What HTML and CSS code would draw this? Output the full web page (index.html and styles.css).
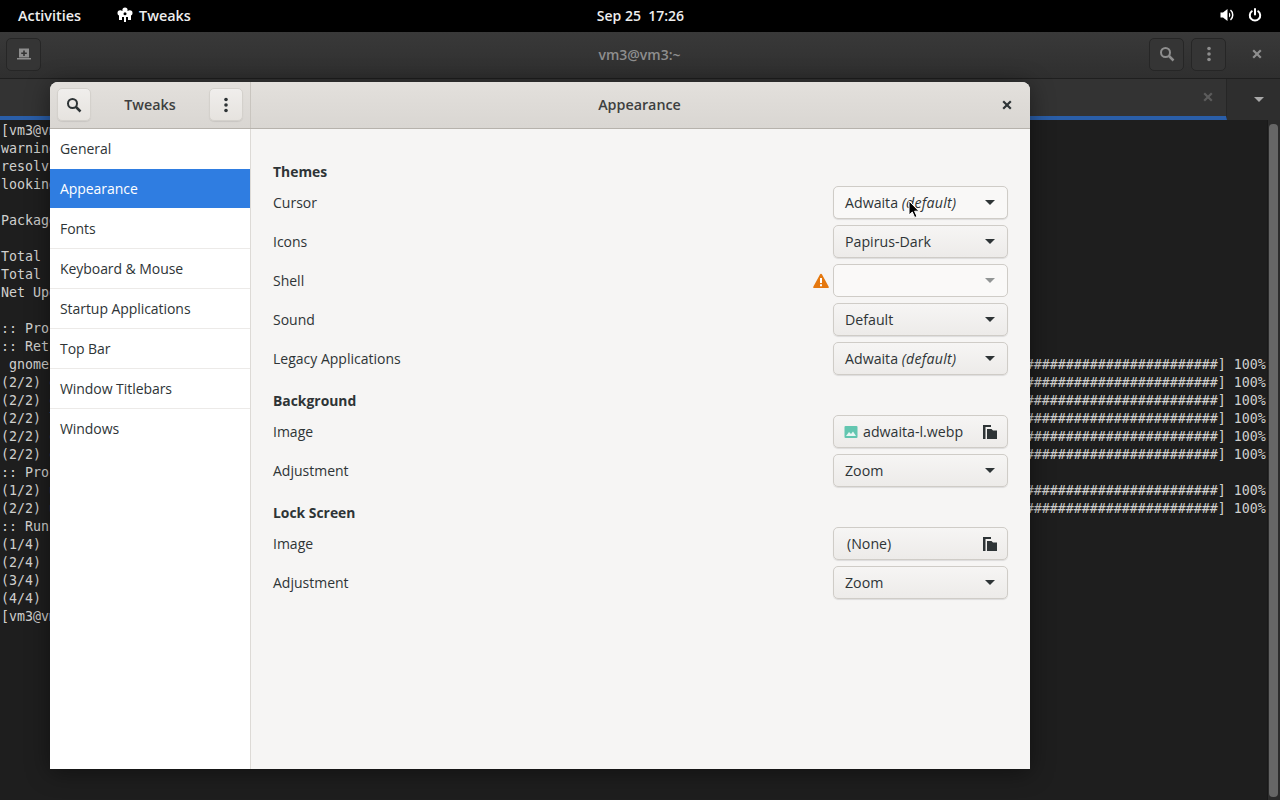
FILE: index.html
```html
<!DOCTYPE html>
<html lang="en">
<head>
<meta charset="utf-8">
<title>Tweaks</title>
<link rel="stylesheet" href="styles.css">
</head>
<body>
<header class="topbar">
  <div class="topbar-left">
    <span class="shell-label">Activities</span>
    <span class="app-menu">
      <svg class="ico16" viewBox="0 0 16 16"><g fill="#fff"><circle cx="8" cy="3" r="2.600"/><circle cx="3.200" cy="6" r="2.700"/><circle cx="12.800" cy="6" r="2.700"/><rect x="3" y="4" width="10" height="6"/><rect x="2" y="8" width="3" height="5"/><rect x="11" y="8" width="3" height="5"/><rect x="7" y="9" width="2" height="6"/></g><g fill="#000"><circle cx="8" cy="6.800" r="1.500"/><rect x="5.400" y="10.500" width="1" height="4"/><rect x="9.600" y="10.500" width="1" height="4"/></g></svg>
      <span class="shell-label">Tweaks</span>
    </span>
  </div>
  <div class="clock shell-label">Sep 25&nbsp; 17:26</div>
  <div class="topbar-right">
    <svg class="ico16" viewBox="0 0 16 16"><path fill="#fff" d="M1.500 5.500H4L8.500 2v12L4 10.500H1.500z"/><path fill="none" stroke="#fff" stroke-width="1.500" d="M11.500 3c3 2.500 3 7.500 0 10"/><path fill="#fff" d="M10 5.500c1.800 1 1.800 4 0 5z"/></svg>
    <svg class="ico16" viewBox="0 0 16 16"><path fill="none" stroke="#fff" stroke-width="2" stroke-linecap="round" d="M8 2v5.500M4.800 4.300a5.200 5.200 0 1 0 6.400 0"/></svg>
  </div>
</header>

<main class="terminal">
  <div class="term-head">
    <button class="tbtn term-new"><svg class="ico16" viewBox="0 0 16 16"><path fill="#8e8e8e" d="M3 2.500h10v9H3zM1 12h14v1.500H1z"/><path fill="#333" d="M7.200 4.500h1.600v2h2V8h-2v2H7.200V8h-2V6.500h2z"/></svg></button>
    <div class="term-title">vm3@vm3:~</div>
    <div class="term-actions">
      <button class="tbtn"><svg class="ico16" viewBox="0 0 16 16"><circle cx="6.500" cy="6.500" r="4.500" fill="none" stroke="#8e8e8e" stroke-width="2"/><path stroke="#8e8e8e" stroke-width="2.500" d="M10 10l4.500 4.500"/></svg></button>
      <button class="tbtn"><svg class="ico16" viewBox="0 0 16 16"><g fill="#8e8e8e"><circle cx="8" cy="2.500" r="1.800"/><circle cx="8" cy="8" r="1.800"/><circle cx="8" cy="13.500" r="1.800"/></g></svg></button>
      <span class="term-close"><svg class="ico16" viewBox="0 0 16 16"><path stroke="#8e8e8e" stroke-width="2.200" d="M4.200 4.200l7.600 7.600M11.800 4.200l-7.600 7.600"/></svg></span>
    </div>
  </div>
  <div class="term-tabs">
    <div class="term-tab"><svg class="ico16 tab-x" viewBox="0 0 16 16"><path stroke="#5c5c5c" stroke-width="2.200" d="M4.200 4.200l7.600 7.600M11.800 4.200l-7.600 7.600"/></svg></div>
    <div class="term-tabmenu"><svg class="caret" viewBox="0 0 10 6"><path fill="#a8a8a8" d="M0 0h10L5 5z"/></svg></div>
  </div>
  <div class="term-body">
<pre class="term-text">[vm3@vm3 ~]$ sudo pacman -S gnome-shell
warning: gnome-shell is up to date
resolving dependencies...
looking for conflicting packages...

Packages (2)

Total   Download Size:   0.00 MiB
Total   Installed Size:  0.00 MiB
Net Upgrade Size:      0.00 MiB

:: Proceed with installation? [Y/n]
:: Retrieving packages...
 gnome-shell                                                                                                    [#######################################] 100%
(2/2) checking keys in keyring                                                                                  [#######################################] 100%
(2/2) checking package integrity                                                                                [#######################################] 100%
(2/2) loading package files                                                                                     [#######################################] 100%
(2/2) checking for file conflicts                                                                               [#######################################] 100%
(2/2) checking available disk space                                                                             [#######################################] 100%
:: Processing package changes...
(1/2) upgrading gnome-shell                                                                                     [#######################################] 100%
(2/2) upgrading gnome-shell-extensions                                                                          [#######################################] 100%
:: Running post-transaction hooks...
(1/4)   Arming ConditionNeedsUpdate...
(2/4)   Compiling GSettings XML schema files...
(3/4)   Updating icon theme caches...
(4/4)   Updating the desktop file MIME type cache...
[vm3@vm3 ~]$</pre>
    <div class="scrollbar"><div class="thumb"></div></div>
  </div>
</main>

<section class="tweaks">
  <div class="tw-head">
    <div class="tw-head-left">
      <button class="hbtn"><svg class="ico16" viewBox="0 0 16 16"><circle cx="6.500" cy="6.500" r="4.500" fill="none" stroke="#2e3436" stroke-width="2"/><path stroke="#2e3436" stroke-width="2.500" d="M10 10l4.500 4.500"/></svg></button>
      <span class="tw-title">Tweaks</span>
      <button class="hbtn"><svg class="ico16" viewBox="0 0 16 16"><g fill="#2e3436"><circle cx="8" cy="2.500" r="1.800"/><circle cx="8" cy="8" r="1.800"/><circle cx="8" cy="13.500" r="1.800"/></g></svg></button>
    </div>
    <div class="tw-head-main">
      <span class="tw-title">Appearance</span>
      <svg class="ico16 tw-close" viewBox="0 0 16 16"><path stroke="#2e3436" stroke-width="2.200" d="M4.200 4.200l7.600 7.600M11.800 4.200l-7.600 7.600"/></svg>
    </div>
  </div>
  <div class="tw-body">
    <nav class="side">
      <div class="side-row">General</div>
      <div class="side-row is-active">Appearance</div>
      <div class="side-row">Fonts</div>
      <div class="side-row">Keyboard &amp; Mouse</div>
      <div class="side-row">Startup Applications</div>
      <div class="side-row">Top Bar</div>
      <div class="side-row">Window Titlebars</div>
      <div class="side-row">Windows</div>
    </nav>
    <div class="panel">
      <h2 class="sec sec-first">Themes</h2>
      <div class="rows">
        <div class="row"><span>Cursor</span><div class="combo"><span>Adwaita <em>(default)</em></span><svg class="caret" viewBox="0 0 10 6"><path fill="#2e3436" d="M0 0h10L5 5z"/></svg></div></div>
        <div class="row"><span>Icons</span><div class="combo combo-grad"><span>Papirus-Dark</span><svg class="caret" viewBox="0 0 10 6"><path fill="#2e3436" d="M0 0h10L5 5z"/></svg></div></div>
        <div class="row"><span>Shell</span><div class="ctl-wrap"><svg class="warn" viewBox="0 0 16 16"><path fill="#e5780f" d="M8 .800c.400 0 .700.200.900.500l6.800 12.500c.300.600-.100 1.300-.800 1.300H1.100c-.700 0-1.100-.700-.800-1.300L7.100 1.300c.200-.300.500-.500.900-.500z"/><path fill="#fff" d="M7 5h2v5H7zM7 11.200h2v2H7z"/></svg><div class="combo combo-off"><span></span><svg class="caret" viewBox="0 0 10 6"><path fill="#929595" d="M0 0h10L5 5z"/></svg></div></div></div>
        <div class="row"><span>Sound</span><div class="combo combo-grad"><span>Default</span><svg class="caret" viewBox="0 0 10 6"><path fill="#2e3436" d="M0 0h10L5 5z"/></svg></div></div>
        <div class="row"><span>Legacy Applications</span><div class="combo combo-grad"><span>Adwaita <em>(default)</em></span><svg class="caret" viewBox="0 0 10 6"><path fill="#2e3436" d="M0 0h10L5 5z"/></svg></div></div>
      </div>
      <h2 class="sec">Background</h2>
      <div class="rows">
        <div class="row"><span>Image</span><div class="combo combo-grad combo-file"><span class="file"><svg class="img-ico" viewBox="0 0 14 14"><rect x="0.500" y="1" width="13" height="12" rx="1" fill="#63c6b0"/><path fill="#e8f6f3" d="M2 11l3-4 2 2 2-2.500 3 4.500z"/></svg>adwaita-l.webp</span><svg class="ico16" viewBox="0 0 16 16"><path fill="#2e3436" d="M1 15V1h8v2H3.500v12z"/><path fill="#2e3436" d="M5 5h4.500L11 6.500h4V15H5z"/></svg></div></div>
        <div class="row"><span>Adjustment</span><div class="combo combo-grad"><span>Zoom</span><svg class="caret" viewBox="0 0 10 6"><path fill="#2e3436" d="M0 0h10L5 5z"/></svg></div></div>
      </div>
      <h2 class="sec">Lock Screen</h2>
      <div class="rows">
        <div class="row"><span>Image</span><div class="combo combo-grad combo-file"><span class="none">(None)</span><svg class="ico16" viewBox="0 0 16 16"><path fill="#2e3436" d="M1 15V1h8v2H3.500v12z"/><path fill="#2e3436" d="M5 5h4.500L11 6.500h4V15H5z"/></svg></div></div>
        <div class="row"><span>Adjustment</span><div class="combo combo-grad"><span>Zoom</span><svg class="caret" viewBox="0 0 10 6"><path fill="#2e3436" d="M0 0h10L5 5z"/></svg></div></div>
      </div>
    </div>
  </div>
</section>

<svg class="pointer" viewBox="0 0 12 19"><path fill="#000" stroke="#fff" stroke-width="1" d="M1 1v14l3.300-3 2.400 5.500 2.300-1-2.400-5.300H11z"/></svg>
</body>
</html>
```
FILE: styles.css
```css
* { box-sizing: border-box; }
html, body { margin: 0; height: 100%; }
body {
  width: 1280px; height: 800px; overflow: hidden; position: relative;
  background: #1e1e1e; display: flex; flex-direction: column;
  font-family: "Open Sans", "Noto Sans", sans-serif; font-size: 14px; color: #2e3436;
}
button { margin: 0; padding: 0; font: inherit; }
svg { display: block; flex: none; }
.ico16 { width: 16px; height: 16px; }
.caret { width: 10px; height: 6px; }

.topbar {
  height: 32px; flex: none; background: #000; color: #eee; display: grid;
  grid-template-columns: 1fr auto 1fr; align-items: center; padding: 0 18px 2px;
}
.shell-label { font-weight: 600; font-size: 14.4px; }
.clock { font-size: 14px; padding-left: 1px; }
.topbar-left { display: flex; align-items: center; gap: 36px; }
.app-menu { display: flex; align-items: center; gap: 6px; }
.topbar-right { display: flex; justify-content: flex-end; gap: 12px; margin-right: -1px; }

.terminal { flex: 1; display: flex; flex-direction: column; min-height: 0; }
.term-head {
  height: 47px; flex: none; display: flex; align-items: center; position: relative; padding: 0 6px 2px;
  background: linear-gradient(#393939, #2f2f2f); border-bottom: 1px solid #1f1f1f;
}
.term-title { position: absolute; left: 0; right: 1px; text-align: center; color: #8e8e8e; font-weight: 600; pointer-events: none; }
.term-actions { margin-left: auto; display: flex; align-items: center; gap: 7px; }
.tbtn {
  width: 35px; height: 33px; display: flex; align-items: center; justify-content: center;
  background: #353535; border: 1px solid #262626; border-radius: 5px;
}
.term-close { width: 46px; display: flex; justify-content: center; margin: 0 -6px 0 1px; }
.term-tabs { height: 41px; flex: none; display: flex; background: #2e2e2e; }
.term-tab {
  width: 1227px; background: #333; border-bottom: 4px solid #2a5ea8;
  display: flex; align-items: center; justify-content: flex-end; padding: 0 10px 2px 0;
  border-right: 1px solid #262626;
}
.term-tabmenu { flex: 1; display: flex; align-items: center; justify-content: center; padding-left: 10px; }
.term-body { flex: 1; min-height: 0; position: relative; background: #1e1e1e; overflow: hidden; }
.term-text {
  margin: 0; padding: 2px 0 0 1px; color: #d0d0ce;
  font-family: "DejaVu Sans Mono", monospace; font-size: 13.3px; line-height: 18px; white-space: pre;
}
.scrollbar { position: absolute; right: 0; top: 0; bottom: 0; width: 13px; background: #2b2b2b; border-left: 1px solid #191919; }
.thumb { position: absolute; left: 1px; right: 2px; top: 4px; bottom: 3px; background: #666; border-radius: 4px; }

.tweaks {
  position: absolute; left: 50px; top: 82px; width: 980px; height: 687px;
  display: flex; flex-direction: column; background: #f6f5f4;
  border-radius: 8px 8px 0 0; overflow: hidden;
  box-shadow: 0 3px 24px rgba(0,0,0,.45);
}
.tw-head { height: 47px; flex: none; display: flex; background: linear-gradient(#e3e0dc, #d9d6d2); border-bottom: 1px solid #b6b2ac; }
.tw-head-left { width: 201px; flex: none; display: flex; align-items: center; justify-content: space-between; padding: 0 7px 1px 7px; border-right: 1px solid #c9c5bf; }
.tw-head-main { flex: 1; position: relative; display: flex; align-items: center; justify-content: center; padding: 0 2px 1px 0; }
.tw-title { font-weight: 600; font-size: 14.3px; color: #3d3f40; }
.tw-close { position: absolute; right: 15px; top: 15px; }
.hbtn {
  width: 34px; height: 33px; display: flex; align-items: center; justify-content: center;
  background: linear-gradient(#f0eeec, #e6e3df); border: 1px solid #d4d1cc; border-radius: 5px;
  box-shadow: 0 1px 1px rgba(0,0,0,.08);
}
.tw-body { flex: 1; display: flex; min-height: 0; }
.side { width: 201px; flex: none; background: #fff; border-right: 1px solid #dddad6; }
.side-row { height: 40px; display: flex; align-items: center; padding-left: 10px; border-bottom: 1px solid #eceae8; color: #2e3436; letter-spacing: -.06px; }
.side-row:nth-child(1) { border-bottom-color: transparent; }
.side-row.is-active { background: #2f7de1; color: #fff; border-bottom-color: transparent; background-clip: padding-box; }
.side-row:last-child { border-bottom-color: transparent; }
.panel { flex: 1; padding: 32px 22px 0; }
.sec { margin: 15px 0 6px; height: 19px; font-size: 13.9px; font-weight: 700; line-height: 21px; color: #2e3436; }
.sec-first { margin-top: 0; }
.rows { display: flex; flex-direction: column; gap: 6px; }
.row { display: flex; align-items: center; justify-content: space-between; height: 33px; }
.ctl-wrap { display: flex; align-items: center; gap: 4px; }
.combo {
  width: 175px; height: 33px; display: flex; align-items: center; justify-content: space-between;
  padding: 0 12px 0 11px; border: 1px solid #cfccc7; border-radius: 5px;
  background: #f9f8f7; box-shadow: 0 1px 1px rgba(0,0,0,.1); font-size: 14.2px;
}
.combo-grad { background: linear-gradient(#f6f5f4, #edebe9); }
.combo-off { background: #faf9f8; box-shadow: none; }
.combo-file { padding-right: 9px; }
.combo em { font-style: italic; letter-spacing: .25px; }
.file { display: flex; align-items: center; gap: 5px; }
.none { padding-left: 2px; }
.warn { width: 16px; height: 16px; }
.img-ico { width: 14px; height: 14px; margin-left: -1px; }
.pointer { position: absolute; left: 908px; top: 200px; width: 12px; height: 19px; }
```
